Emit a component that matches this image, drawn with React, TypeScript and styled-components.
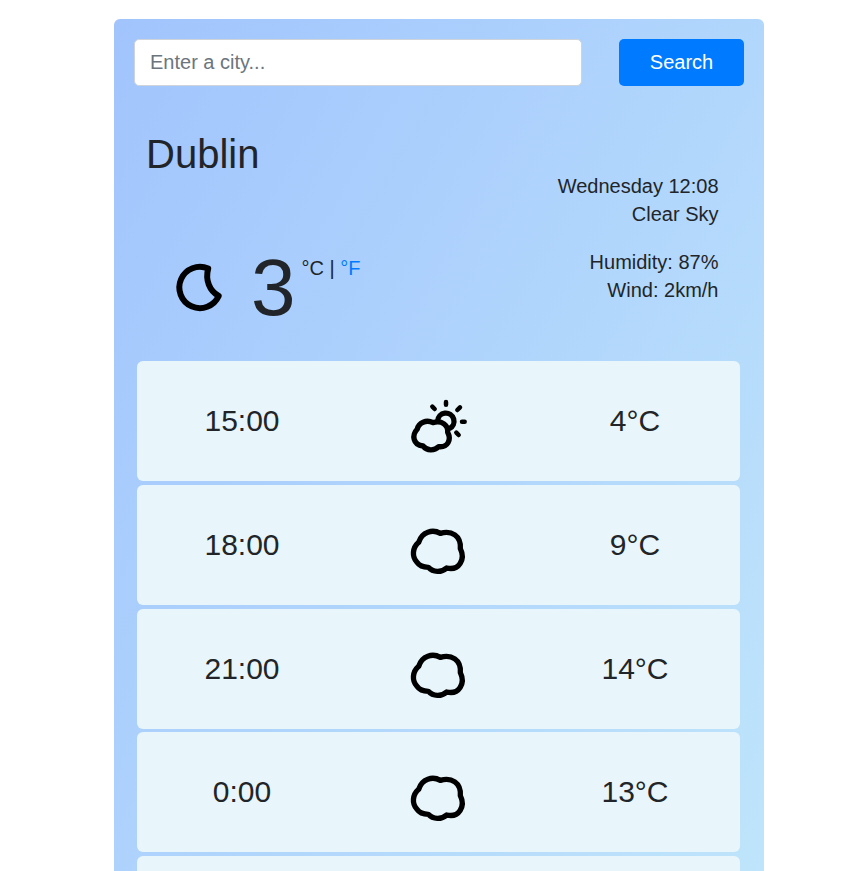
import React from "react";
import styled, { createGlobalStyle } from "styled-components";

const GlobalStyle = createGlobalStyle`
  *, *::before, *::after { box-sizing: border-box; }
  html, body { margin: 0; background: #fff; }
  body {
    font-family: "Liberation Sans", Arial, sans-serif;
    font-size: 20px;
    line-height: 28px;
    color: #212529;
  }
`;

const Page = styled.div`
  height: 871px;
  padding: 19px 88px 0 114px;
  overflow: hidden;
`;

const Card = styled.main`
  width: 650px;
  height: 1110px;
  padding: 20px;
  border-radius: 6px;
  background-image: linear-gradient(120deg, #a1c4fd 0%, #c2e9fb 100%);
`;

const SearchForm = styled.form`
  display: flex;
  justify-content: space-between;
  height: 47px;
`;

const CityInput = styled.input`
  width: 448px;
  padding: 0 15px 2px;
  border: 1px solid #ced4da;
  border-radius: 5px;
  background: #fff;
  font: inherit;
  outline: none;
  &::placeholder { color: #6c757d; opacity: 1; }
`;

const SearchButton = styled.button`
  width: 125px;
  padding: 0 0 2px;
  border: 0;
  border-radius: 5px;
  background: #007bff;
  color: #fff;
  font: inherit;
`;

const Current = styled.section`
  display: flex;
  justify-content: space-between;
  height: 275px;
  padding: 44px 25.5px 0 12px;
`;

const City = styled.h1`
  margin: 0;
  font-size: 40px;
  font-weight: 400;
  line-height: 49px;
`;

const Reading = styled.div`
  display: flex;
  align-items: flex-start;
  margin-top: 67px;
`;

const MoonSvg = styled.svg`
  width: 70px;
  height: 65px;
  margin: 9px 0 0 19px;
`;

const Temperature = styled.span`
  margin-left: 16px;
  font-size: 80px;
  line-height: 83px;
`;

const Units = styled.span`
  margin: 8px 0 0 6px;
  white-space: nowrap;
`;

const UnitLink = styled.a`
  color: #007bff;
  text-decoration: none;
`;

const Details = styled.div`
  display: flex;
  flex-direction: column;
  gap: 20px;
  margin-top: 42px;
  text-align: right;
`;

const Forecast = styled.ul`
  display: grid;
  gap: 3.8px;
  margin: 0 4px 0 3px;
  padding: 0;
  list-style: none;
`;

const ForecastRow = styled.li`
  display: grid;
  grid-template-columns: 210px 1fr 210px;
  height: 120px;
  border-radius: 6px;
  background: #e8f6fb;
  font-size: 30px;
  line-height: 120px;
  text-align: center;
`;

const ForecastIcon = styled.svg`
  display: block;
  width: 80px;
  height: 70px;
  margin: 30px 0 0 53px;
`;

const Moon = () => (
  <MoonSvg viewBox="0 0 70 65" fill="none" stroke="#000" strokeWidth="6" strokeLinejoin="round">
    <path d="M43.2 13.6A20.6 20.6 0 1 0 53.7 41C44.5 36 40 25 43.2 13.6Z" />
  </MoonSvg>
);

const Cloud = () => (
  <ForecastIcon viewBox="0 0 240 210" fill="none" stroke="#000" strokeWidth="16" strokeLinejoin="round">
    <path d="M121 55C98 42 66 50 56 82C37 99 35 124 51 142C59 154 72 157 85 157C99 173 125 173 140 159C177 168 197 133 181 101C184 62 154 45 121 55Z" />
  </ForecastIcon>
);

const SunCloud = () => (
  <ForecastIcon viewBox="0 0 240 210" fill="none" stroke="#000" strokeWidth="16" strokeLinejoin="round">
    <path d="M99 95C79 85 56 95 52 114C35 132 38 161 69 165C81 180 103 180 116 167C143 170 155 147 143 124C145 103 126 87 99 95Z" />
    <path d="M113 90A24.5 24.5 0 1 1 148 113" />
    <path strokeWidth="13.5" strokeLinecap="round" d="M138 33V41M97 47L104 54M180 49L172 57M186 92H194M169 125L176 132" />
  </ForecastIcon>
);

const hours = [
  { time: "15:00", icon: <SunCloud />, temp: 4 },
  { time: "18:00", icon: <Cloud />, temp: 9 },
  { time: "21:00", icon: <Cloud />, temp: 14 },
  { time: "0:00", icon: <Cloud />, temp: 13 },
];

export default function App() {
  return (
    <>
      <GlobalStyle />
      <Page>
        <Card>
          <SearchForm>
            <CityInput placeholder="Enter a city..." />
            <SearchButton type="button">Search</SearchButton>
          </SearchForm>
          <Current>
            <div>
              <City>Dublin</City>
              <Reading>
                <Moon />
                <Temperature>3</Temperature>
                <Units>
                  °C | <UnitLink href="#">°F</UnitLink>
                </Units>
              </Reading>
            </div>
            <Details>
              <div>Wednesday 12:08<br />Clear Sky</div>
              <div>Humidity: 87%<br />Wind: 2km/h</div>
            </Details>
          </Current>
          <Forecast>
            {hours.map((hour) => (
              <ForecastRow key={hour.time}>
                <span>{hour.time}</span>
                {hour.icon}
                <span>{hour.temp}°C</span>
              </ForecastRow>
            ))}
            <ForecastRow />
          </Forecast>
        </Card>
      </Page>
    </>
  );
}
